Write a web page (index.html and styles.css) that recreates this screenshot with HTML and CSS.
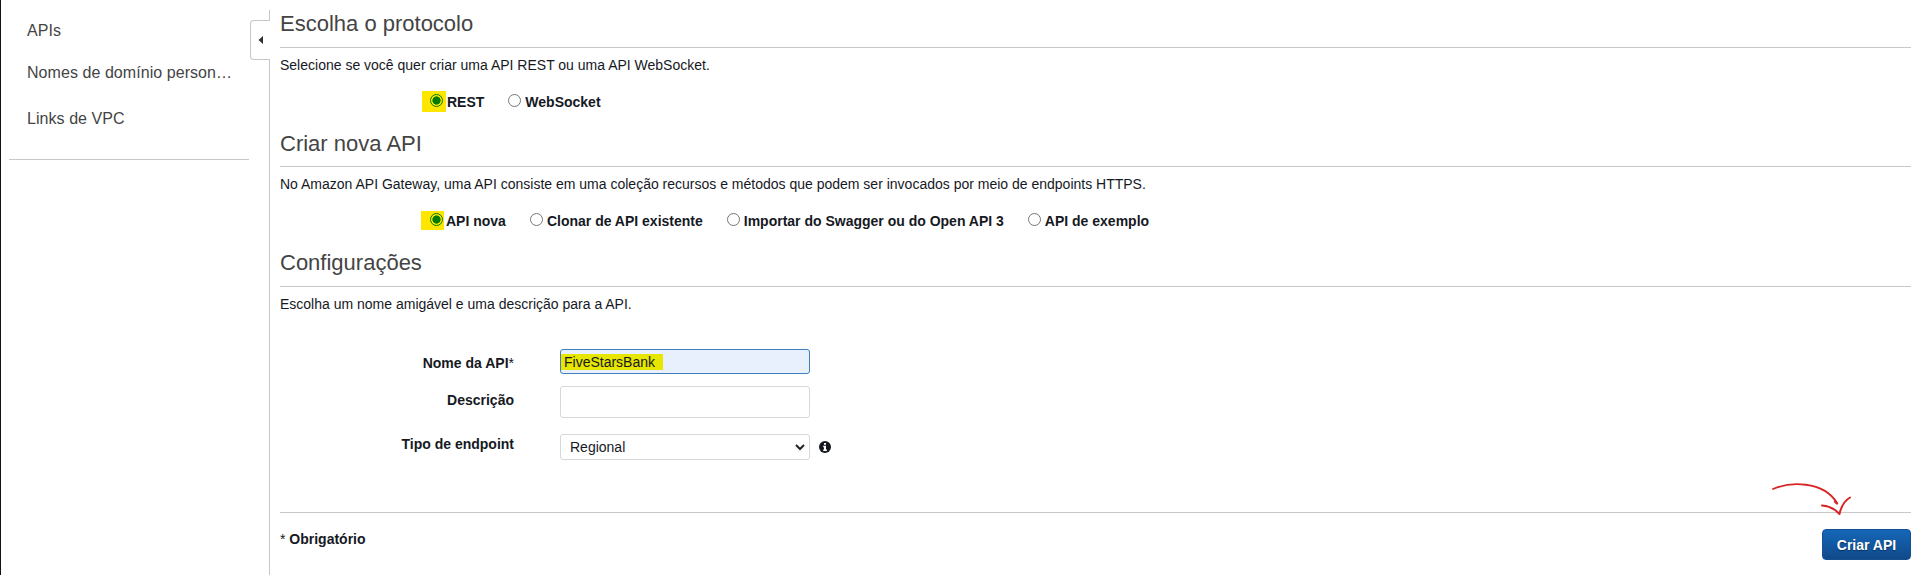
FILE: index.html
```html
<!DOCTYPE html>
<html lang="pt-BR">
<head>
<meta charset="utf-8">
<title>Criar API</title>
<link rel="stylesheet" href="styles.css">
</head>
<body>
<div class="app">
  <nav class="sidebar">
    <a class="nav-item">APIs</a>
    <a class="nav-item nav-domains">Nomes de domínio person…</a>
    <a class="nav-item nav-vpc">Links de VPC</a>
  </nav>
  <div class="divider">
    <div class="divider-top"></div>
    <button class="collapse" aria-label="Recolher"><svg width="6" height="8" viewBox="0 0 6 8"><path d="M0.5 4 L5 0 V8 Z" fill="#333"/></svg></button>
    <div class="divider-rest"></div>
  </div>
  <main class="main">
    <section class="section">
      <h2>Escolha o protocolo</h2>
      <p>Selecione se você quer criar uma API REST ou uma API WebSocket.</p>
      <div class="radios">
        <label class="radio marked first"><i class="dot on"></i><span>REST</span></label>
        <label class="radio"><i class="dot"></i><span>WebSocket</span></label>
      </div>
    </section>
    <section class="section second">
      <h2>Criar nova API</h2>
      <p>No Amazon API Gateway, uma API consiste em uma coleção recursos e métodos que podem ser invocados por meio de endpoints HTTPS.</p>
      <div class="radios">
        <label class="radio marked"><i class="dot on"></i><span>API nova</span></label>
        <label class="radio"><i class="dot"></i><span>Clonar de API existente</span></label>
        <label class="radio"><i class="dot"></i><span>Importar do Swagger ou do Open API 3</span></label>
        <label class="radio"><i class="dot"></i><span>API de exemplo</span></label>
      </div>
    </section>
    <section class="settings">
      <h2>Configurações</h2>
      <p>Escolha um nome amigável e uma descrição para a API.</p>
      <div class="row row-name">
        <label>Nome da API<span class="star">*</span></label>
        <div class="field name"><mark>FiveStarsBank</mark></div>
      </div>
      <div class="row row-desc">
        <label>Descrição</label>
        <div class="field"></div>
      </div>
      <div class="row row-type">
        <label>Tipo de endpoint</label>
        <div class="field select"><span>Regional</span><svg width="10" height="7" viewBox="0 0 10 7"><path d="M1 1 L5 5 L9 1" fill="none" stroke="#222" stroke-width="2"/></svg></div>
        <svg class="info" width="12" height="12" viewBox="0 0 12 12"><circle cx="6" cy="6" r="6" fill="#16191f"/><path d="M5 2h2v1.8H5zM4.2 4.8H7v3.6h.9V10H4.2V8.4H5V6.3h-.8z" fill="#fff"/></svg>
      </div>
    </section>
    <footer class="footer">
      <div class="required"><span class="star">*</span> Obrigatório</div>
      <button class="create">Criar API</button>
      <svg class="arrow" width="84" height="36" viewBox="0 0 84 36" fill="none" stroke="#d92424" stroke-linecap="round" stroke-linejoin="round"><path d="M3 8 C19 1 53 -1 67 22" stroke-width="1.8"/><path d="M65 20.5 L67 22.5" stroke-width="2.4"/><path d="M52 24.5 C59 25 65 28 69.5 33 C71 26 74 20 80 16.5" stroke-width="2"/></svg>
    </footer>
  </main>
</div>
</body>
</html>
```
FILE: styles.css
```css
* { box-sizing: border-box; }
body {
  margin: 0;
  background: #fff;
  color: #16191f;
  font: 14px/20px "Liberation Sans", Arial, sans-serif;
  overflow: hidden;
}
.app { display: flex; height: 575px; border-left: 1px solid #1a1014; }
.sidebar {
  width: 240px;
  height: 160px;
  margin-left: 8px;
  padding: 21px 0 0 18px;
  border-bottom: 1px solid #c8c8c8;
  display: flex;
  flex-direction: column;
}
.nav-item { font-size: 16px; line-height: 20px; letter-spacing: 0.06px; color: #444; white-space: nowrap; }
.nav-domains { margin-top: 22px; }
.nav-vpc { margin-top: 26px; }
.divider { width: 20px; margin-left: 1px; padding-top: 10px; display: flex; flex-direction: column; }
.divider-top { height: 10px; border-right: 1px solid #c8c8c8; }
.collapse {
  height: 40px;
  padding: 0 6px 0 0;
  display: flex;
  align-items: center;
  justify-content: flex-end;
  background: #fff;
  border: 1px solid #c8c8c8;
  border-right: 0;
  border-radius: 4px 0 0 4px;
}
.divider-rest { flex: 1; border-right: 1px solid #c8c8c8; }
.main { width: 1631px; margin-left: 10px; padding-top: 10px; }
h2 {
  height: 38px;
  margin: 0;
  border-bottom: 1px solid #c8c8c8;
  font-size: 22px;
  font-weight: 400;
  line-height: 28px;
  color: #444;
}
p { margin: 7px 0 0; }
.section { height: 119px; }
.second { height: 120px; }
.second h2 { padding-top: 1px; }
.radios { display: flex; gap: 24px; padding-left: 142px; margin-top: 17px; }
.second .radios { padding-left: 141px; }
.radio { display: flex; height: 20px; font-weight: 700; }
.dot {
  width: 13px;
  height: 13px;
  margin: 2px 4px 0 8px;
  border: 1px solid #767676;
  border-radius: 50%;
  background: #fff;
}
.radio:not(.marked) .dot { margin-left: 0; }
.dot.on {
  border-color: #007a00;
  background: radial-gradient(circle, #007a00 3.8px, #ffe600 4.4px);
}
.marked { background: linear-gradient(#ffe600, #ffe600) 0 0 / 23px 19px no-repeat; }
.first {
  background-size: 24px 21px;
  height: 21px;
  margin: -1px 0;
  padding-top: 1px;
}
.second .marked .dot { margin-left: 9px; margin-right: 3px; }
.row { display: flex; }
.row label { width: 234px; text-align: right; font-weight: 700; }
.star { font-weight: 400; }
.field {
  width: 250px;
  height: 32px;
  margin-left: 46px;
  border: 1px solid #d5d8dc;
  border-radius: 3px;
  background: #fff;
}
.row-name { margin-top: 35px; }
.row-name label { padding-top: 4px; }
.name { height: 25px; background: #e8f0fe; border-color: #3f7fbf; padding-top: 4px; }
mark { display: block; width: 102px; height: 16px; padding-left: 3px; line-height: 16px; background: #e6e600; color: #16191f; }
.row-desc { margin-top: 12px; }
.row-desc label { padding-top: 4px; }
.row-type { margin-top: 16px; }
.select { height: 26px; display: flex; align-items: center; justify-content: space-between; padding: 0 4px 0 9px; }
.info { margin: 7px 0 0 9px; }
.footer { display: flex; justify-content: space-between; position: relative; margin-top: 52px; padding-top: 16px; border-top: 1px solid #c8c8c8; }
.required { font-weight: 700; }
.create {
  width: 89px;
  height: 31px;
  padding: 0;
  border: 1px solid #13508f;
  border-radius: 4px;
  background: linear-gradient(#1467b8, #11498a);
  color: #fff;
  font: 700 14px "Liberation Sans", Arial, sans-serif;
  text-shadow: 0 1px 1px #0a3060;
}
.arrow { position: absolute; right: 57px; top: -32px; }
```
